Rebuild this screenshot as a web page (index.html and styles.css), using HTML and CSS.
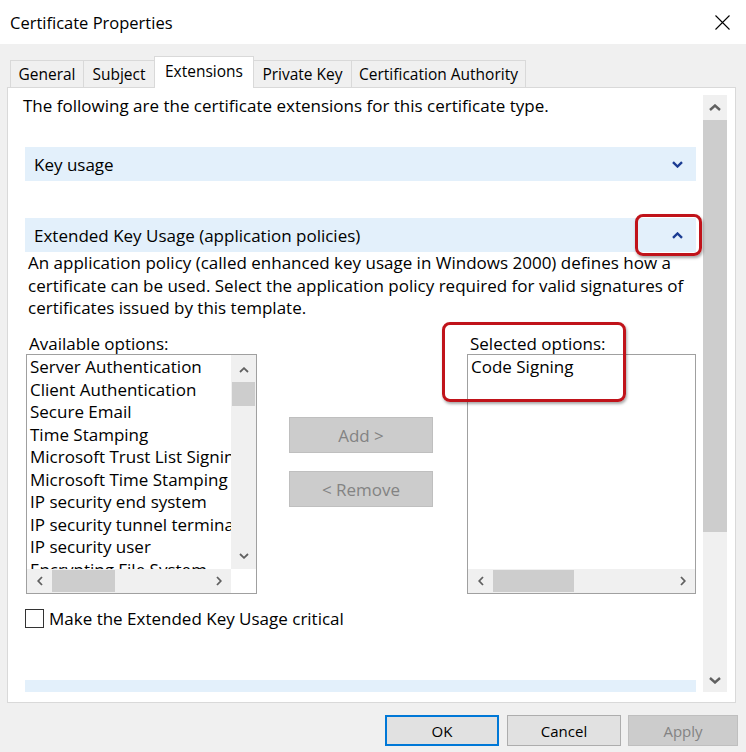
FILE: index.html
```html
<!DOCTYPE html>
<html>
<head>
<meta charset="utf-8">
<link rel="stylesheet" href="styles.css">
</head>
<body>
<div class="window">
  <div class="titlebar">
    <span class="title">Certificate Properties</span>
    <svg class="close" width="15" height="15" viewBox="0 0 15 15"><path d="M0.5 0.5 L14.5 14.5 M14.5 0.5 L0.5 14.5" stroke="#000" stroke-width="1.1" fill="none"/></svg>
  </div>
  <div class="tabs">
    <div class="tab t-general">General</div>
    <div class="tab t-subject">Subject</div>
    <div class="tab t-ext active">Extensions</div>
    <div class="tab t-private">Private Key</div>
    <div class="tab t-ca">Certification Authority</div>
  </div>
  <div class="panel">
    <div class="content">
      <p class="intro">The following are the certificate extensions for this certificate type.</p>
      <div class="bar bar-key">
        <span>Key usage</span>
        <svg class="bar-chev" width="11" height="7" viewBox="0 0 11 7"><polyline points="1,1.2 5.5,5.5 10,1.2" fill="none" stroke="#1b3c93" stroke-width="2.4"/></svg>
      </div>
      <div class="bar bar-eku">
        <span>Extended Key Usage (application policies)</span>
        <svg class="bar-chev" width="11" height="7" viewBox="0 0 11 7"><polyline points="1,5.8 5.5,1.5 10,5.8" fill="none" stroke="#1b3c93" stroke-width="2.4"/></svg>
      </div>
      <div class="eku-body">
        <p class="desc">An application policy (called enhanced key usage in Windows 2000) defines how a<br>certificate can be used. Select the application policy required for valid signatures of<br>certificates issued by this template.</p>
        <div class="lists">
          <div class="col">
            <div class="label">Available options:</div>
            <div class="listbox lb-avail">
              <div class="lb-items">
                <div class="item">Server Authentication</div>
                <div class="item">Client Authentication</div>
                <div class="item">Secure Email</div>
                <div class="item">Time Stamping</div>
                <div class="item">Microsoft Trust List Signing</div>
                <div class="item">Microsoft Time Stamping</div>
                <div class="item">IP security end system</div>
                <div class="item">IP security tunnel termination</div>
                <div class="item">IP security user</div>
                <div class="item">Encrypting File System</div>
              </div>
              <div class="sb-v">
                <div class="sb-btn sb-up"><svg width="10" height="6" viewBox="0 0 10 6"><polyline points="1,5 5,1.2 9,5" fill="none" stroke="#606060" stroke-width="1.8"/></svg></div>
                <div class="sb-thumb lb-vthumb"></div>
                <div class="sb-fill"></div>
                <div class="sb-btn sb-down"><svg width="10" height="6" viewBox="0 0 10 6"><polyline points="1,1 5,4.8 9,1" fill="none" stroke="#606060" stroke-width="1.8"/></svg></div>
              </div>
              <div class="sb-h">
                <div class="sb-hbtn"><svg width="6" height="10" viewBox="0 0 6 10"><polyline points="5,1 1.2,5 5,9" fill="none" stroke="#606060" stroke-width="1.8"/></svg></div>
                <div class="sb-hthumb avail-hthumb"></div>
                <div class="sb-fill"></div>
                <div class="sb-hbtn"><svg width="6" height="10" viewBox="0 0 6 10"><polyline points="1,1 4.8,5 1,9" fill="none" stroke="#606060" stroke-width="1.8"/></svg></div>
              </div>
              <div class="corner"></div>
            </div>
          </div>
          <div class="col col-btns">
            <button class="btn-mid">Add &gt;</button>
            <button class="btn-mid">&lt; Remove</button>
          </div>
          <div class="col col-sel">
            <div class="label">Selected options:</div>
            <div class="listbox lb-sel">
              <div class="lb-items sel-items">
                <div class="item">Code Signing</div>
              </div>
              <div class="sb-h">
                <div class="sb-hbtn"><svg width="6" height="10" viewBox="0 0 6 10"><polyline points="5,1 1.2,5 5,9" fill="none" stroke="#606060" stroke-width="1.8"/></svg></div>
                <div class="sb-hthumb sel-hthumb"></div>
                <div class="sb-fill"></div>
                <div class="sb-hbtn"><svg width="6" height="10" viewBox="0 0 6 10"><polyline points="1,1 4.8,5 1,9" fill="none" stroke="#606060" stroke-width="1.8"/></svg></div>
              </div>
            </div>
          </div>
        </div>
        <div class="check"><span class="box"></span><span>Make the Extended Key Usage critical</span></div>
      </div>
      <div class="bar bar-next"><span>Basic constraints</span></div>
    </div>
    <div class="mainscroll">
      <div class="ms-btn ms-up"><svg width="12" height="7" viewBox="0 0 12 7"><polyline points="1,6 6,1.5 11,6" fill="none" stroke="#606060" stroke-width="2.4"/></svg></div>
      <div class="ms-thumb"></div>
      <div class="sb-fill"></div>
      <div class="ms-btn ms-down"><svg width="12" height="7" viewBox="0 0 12 7"><polyline points="1,1 6,5.5 11,1" fill="none" stroke="#606060" stroke-width="2.4"/></svg></div>
    </div>
  </div>
  <div class="buttons">
    <button class="dlg-btn btn-ok">OK</button>
    <button class="dlg-btn btn-cancel">Cancel</button>
    <button class="dlg-btn btn-apply">Apply</button>
  </div>
  <div class="annot annot-chev"></div>
  <div class="annot annot-sel"></div>
</div>
</body>
</html>
```
FILE: styles.css
```css
body {
  margin: 0;
  background: #f0f0f0;
  font-family: "Open Sans", "Noto Sans", sans-serif;
  font-size: 17px;
  color: #000;
}
.window {
  position: relative;
  width: 746px;
  height: 752px;
  overflow: hidden;
}
.titlebar {
  height: 44px;
  background: #fff;
  display: flex;
  align-items: center;
  justify-content: space-between;
  padding: 0 16px 0 10px;
  box-sizing: border-box;
}
.title {
  font-size: 16.5px;
}
.close {
  display: block;
}
.tabs {
  display: flex;
  align-items: flex-end;
  margin: 12px 0 0 10px;
  height: 31px;
  font-size: 15.5px;
}
.tab {
  box-sizing: border-box;
  height: 27px;
  border: 1px solid #d9d9d9;
  border-bottom: none;
  background: #f0f0f0;
  display: flex;
  align-items: center;
  justify-content: center;
  margin-left: -1px;
  white-space: nowrap;
  padding-bottom: 1px;
}
.tab:first-child {
  margin-left: 0;
}
.tab.active {
  height: 32px;
  background: #fff;
  margin-bottom: -1px;
  padding-bottom: 4px;
  position: relative;
  z-index: 1;
}
.t-general { width: 74px; }
.t-subject { width: 72px; }
.t-ext { width: 100px; }
.t-private { width: 99px; }
.t-ca { width: 175px; }
.panel {
  margin-left: 7px;
  width: 729px;
  height: 616px;
  box-sizing: border-box;
  border: 1px solid #d9d9d9;
  background: #fff;
  display: flex;
  align-items: flex-start;
}
.content {
  width: 695px;
  height: 604px;
  overflow: hidden;
  flex: none;
}
.intro {
  margin: 7px 0 0 15px;
  line-height: 22px;
  white-space: nowrap;
}
.bar {
  margin-left: 17px;
  width: 671px;
  height: 34px;
  background: #e3f0fb;
  display: flex;
  align-items: center;
  justify-content: space-between;
  padding: 0 13px 0 9px;
  box-sizing: border-box;
  flex: none;
}
.bar-chev {
  display: block;
}
.bar-key { margin-top: 30px; }
.bar-eku { margin-top: 37px; }
.bar-next { margin-top: 50.5px; }
.eku-body {
  margin-left: 18px;
}
.desc {
  margin: 0 0 0 2px;
  line-height: 22.5px;
  white-space: nowrap;
}
.lists {
  display: flex;
  margin-top: 14.5px;
}
.col {
  display: flex;
  flex-direction: column;
}
.label {
  line-height: 20px;
  padding-left: 3px;
  white-space: nowrap;
}
.listbox {
  box-sizing: border-box;
  border: 1px solid #a0a0a0;
  background: #fff;
  display: grid;
  overflow: hidden;
}
.lb-avail {
  width: 231px;
  height: 240px;
  grid-template-columns: 1fr 25px;
  grid-template-rows: 1fr 24px;
}
.lb-sel {
  width: 229px;
  height: 240px;
  grid-template-columns: 1fr;
  grid-template-rows: 1fr 24px;
}
.lb-items {
  overflow: hidden;
  padding: 1px 0 0 3px;
  white-space: nowrap;
  min-width: 0;
  min-height: 0;
}
.sel-items {
  padding-left: 3px;
}
.item {
  line-height: 22.5px;
}
.sb-v {
  background: #f0f0f0;
  display: flex;
  flex-direction: column;
  min-height: 0;
}
.sb-btn {
  display: flex;
  align-items: center;
  justify-content: center;
  flex: none;
}
.sb-up { height: 27px; padding-top: 2px; box-sizing: border-box; }
.sb-down { height: 26px; }
.lb-vthumb {
  height: 24px;
  background: #cdcdcd;
  margin: 0 1px;
  flex: none;
}
.sb-fill {
  flex: 1;
}
.sb-h {
  background: #f0f0f0;
  display: flex;
  align-items: stretch;
  min-width: 0;
}
.sb-hbtn {
  width: 25px;
  display: flex;
  align-items: center;
  justify-content: center;
  flex: none;
}
.sb-hthumb {
  background: #cdcdcd;
  margin: 1px 0;
  flex: none;
}
.avail-hthumb { width: 63px; }
.sel-hthumb { width: 81px; }
.corner {
  background: #fff;
}
.col-btns {
  margin-left: 32px;
  padding-top: 83px;
  gap: 18px;
}
.btn-mid {
  width: 144px;
  height: 36px;
  box-sizing: border-box;
  background: #cccccc;
  border: 1px solid #bfbfbf;
  color: #838383;
  font: inherit;
  padding: 0;
}
.col-sel {
  margin-left: 34px;
}
.check {
  display: flex;
  align-items: center;
  margin: 13.5px 0 0 -1px;
  height: 22px;
  white-space: nowrap;
}
.box {
  width: 19px;
  height: 19px;
  box-sizing: border-box;
  border: 1px solid #333;
  background: #fff;
  margin-right: 5px;
  flex: none;
}
.mainscroll {
  margin-top: 7px;
  width: 24px;
  height: 597px;
  background: #f0f0f0;
  display: flex;
  flex-direction: column;
  flex: none;
}
.ms-btn {
  display: flex;
  align-items: center;
  justify-content: center;
  flex: none;
}
.ms-up { height: 25px; }
.ms-down { height: 24px; }
.ms-thumb {
  height: 412px;
  background: #cdcdcd;
  flex: none;
}
.buttons {
  display: flex;
  justify-content: flex-end;
  margin-top: 12px;
  padding-right: 8px;
}
.dlg-btn {
  height: 31px;
  box-sizing: border-box;
  font-family: inherit;
  font-size: 15px;
  padding: 0;
  background: #e1e1e1;
  border: 1px solid #adadad;
  color: #000;
}
.btn-ok {
  width: 114px;
  border: 2px solid #0078d7;
}
.btn-cancel {
  width: 114px;
  margin-left: 8px;
}
.btn-apply {
  width: 110px;
  margin-left: 7px;
  background: #cccccc;
  border-color: #bfbfbf;
  color: #838383;
}
.annot {
  position: absolute;
  box-sizing: border-box;
  border: 3px solid #c0131a;
  border-radius: 8px;
  box-shadow: 1px 2px 3px rgba(0, 0, 0, 0.35);
}
.annot-chev {
  left: 635px;
  top: 214px;
  width: 67px;
  height: 42px;
}
.annot-sel {
  left: 442px;
  top: 322px;
  width: 184px;
  height: 80px;
}
```
